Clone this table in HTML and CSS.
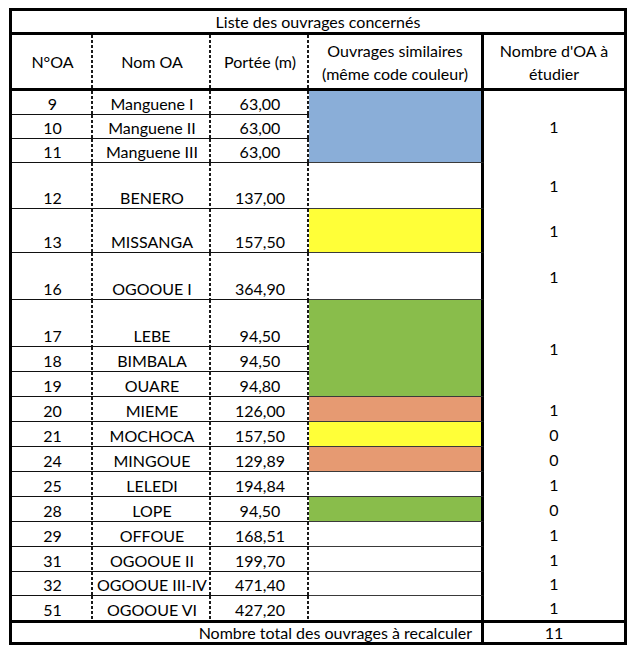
FILE: index.html
```html
<!DOCTYPE html>
<html lang="fr">
<head>
<meta charset="utf-8">
<title>Liste des ouvrages concernés</title>
<link rel="stylesheet" href="styles.css">
</head>
<body>
<div class="sheet">
  <div class="title">Liste des ouvrages concernés</div>

  <div class="hd dash">N°OA</div>
  <div class="hd dash">Nom OA</div>
  <div class="hd dash">Portée (m)</div>
  <div class="hd sim">Ouvrages similaires<br>(même code couleur)</div>
  <div class="hd last">Nombre d'OA à<br>étudier</div>

  <div class="c dash">9</div><div class="c dash">Manguene I</div><div class="c dash">63,00</div>
  <div class="col blue span3"></div><div class="n span3">1</div>
  <div class="c dash">10</div><div class="c dash">Manguene II</div><div class="c dash">63,00</div>
  <div class="c dash">11</div><div class="c dash">Manguene III</div><div class="c dash">63,00</div>

  <div class="c dash">12</div><div class="c dash">BENERO</div><div class="c dash">137,00</div>
  <div class="col"></div><div class="n">1</div>

  <div class="c dash">13</div><div class="c dash">MISSANGA</div><div class="c dash">157,50</div>
  <div class="col yellow"></div><div class="n">1</div>

  <div class="c dash">16</div><div class="c dash">OGOOUE I</div><div class="c dash">364,90</div>
  <div class="col"></div><div class="n">1</div>

  <div class="c dash">17</div><div class="c dash">LEBE</div><div class="c dash">94,50</div>
  <div class="col green span3"></div><div class="n span3">1</div>
  <div class="c dash">18</div><div class="c dash">BIMBALA</div><div class="c dash">94,50</div>
  <div class="c dash">19</div><div class="c dash">OUARE</div><div class="c dash">94,80</div>

  <div class="c dash">20</div><div class="c dash">MIEME</div><div class="c dash">126,00</div>
  <div class="col salmon"></div><div class="n">1</div>

  <div class="c dash">21</div><div class="c dash">MOCHOCA</div><div class="c dash">157,50</div>
  <div class="col yellow"></div><div class="n">0</div>

  <div class="c dash">24</div><div class="c dash">MINGOUE</div><div class="c dash">129,89</div>
  <div class="col salmon"></div><div class="n">0</div>

  <div class="c dash">25</div><div class="c dash">LELEDI</div><div class="c dash">194,84</div>
  <div class="col"></div><div class="n">1</div>

  <div class="c dash">28</div><div class="c dash">LOPE</div><div class="c dash">94,50</div>
  <div class="col green"></div><div class="n">0</div>

  <div class="c dash">29</div><div class="c dash">OFFOUE</div><div class="c dash">168,51</div>
  <div class="col"></div><div class="n">1</div>

  <div class="c dash">31</div><div class="c dash">OGOOUE II</div><div class="c dash">199,70</div>
  <div class="col"></div><div class="n">1</div>

  <div class="c dash">32</div><div class="c dash">OGOOUE III-IV</div><div class="c dash">471,40</div>
  <div class="col"></div><div class="n">1</div>

  <div class="c dash end">51</div><div class="c dash end">OGOOUE VI</div><div class="c dash end">427,20</div>
  <div class="col end"></div><div class="n">1</div>

  <div class="total">Nombre total des ouvrages à recalculer</div>
  <div class="total-n">11</div>
</div>
</body>
</html>
```

FILE: styles.css
```css
html, body {
  margin: 0;
  padding: 0;
  background: #fff;
}

body {
  font-family: Lato, "Noto Sans", "Liberation Sans", sans-serif;
  font-size: 16px;
  color: #000;
}

.sheet {
  display: grid;
  grid-template-columns: 81px 118px 98px 175px 140px;
  grid-template-rows:
    24px 56px
    24px 24px 24px 46px 44px 47px 47px
    25px 25px 25px 25px 25px 25px 25px 25px 25px
    24px 24px
    22px;
  width: max-content;
  margin: 8px 0 0 9px;
  border: 3px solid #000;
}

.sheet > div {
  box-sizing: border-box;
  line-height: 20px;
}

.title {
  grid-column: 1 / -1;
  border-bottom: 3px solid #000;
  display: flex;
  align-items: center;
  justify-content: center;
}

.hd {
  border-bottom: 3px solid #000;
  display: flex;
  align-items: center;
  justify-content: center;
  text-align: center;
}

.sheet > .hd.sim,
.sheet > .hd.last {
  line-height: 23px;
  padding-top: 1px;
}

.hd.sim {
  border-right: 3px solid #000;
}

.dash {
  background-image: repeating-linear-gradient(to bottom, #1a1a1a 0 3px, transparent 3px 5px);
  background-repeat: no-repeat;
  background-size: 2px 100%;
  background-position: right top;
}

.c {
  border-bottom: 1px solid #111;
  display: flex;
  align-items: flex-end;
  justify-content: center;
  white-space: nowrap;
}

.col {
  border-bottom: 1px solid #3a3a3a;
  border-right: 3px solid #000;
  background: #fff;
}

.span3 {
  grid-row: span 3;
}

.blue { background: #8aaed8; }
.yellow { background: #ffff38; }
.green { background: #89bd4b; }
.salmon { background: #e69a72; }

.sheet > .end {
  border-bottom: 0;
}

.n {
  display: flex;
  align-items: center;
  justify-content: center;
}

.total {
  grid-column: 1 / 5;
  border-top: 3px solid #000;
  border-right: 3px solid #000;
  display: flex;
  align-items: center;
  justify-content: flex-end;
  padding-right: 9px;
}

.total-n {
  border-top: 3px solid #000;
  display: flex;
  align-items: center;
  justify-content: center;
}
```
